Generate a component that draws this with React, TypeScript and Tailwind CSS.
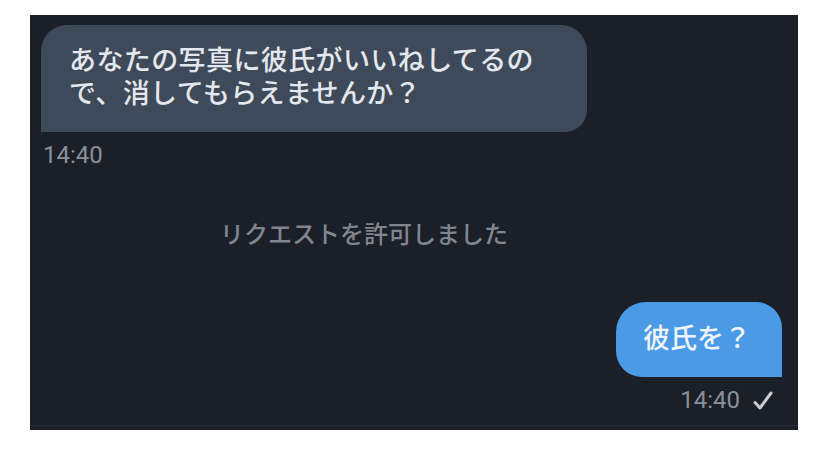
export default function App() {
  return (
    <div className="min-h-screen bg-white pt-[15px] pl-[30px] font-['Roboto','Noto_Sans_CJK_JP',sans-serif]">
      <div className="flex h-[415px] w-[768px] flex-col bg-[#1b1f27] pt-[10px]">
        {/* incoming */}
        <div className="ml-[11px] w-[546px] rounded-tl-[26px] rounded-tr-[26px] rounded-br-[22px] bg-[#3e4a5a] pb-[21px] pl-[28px] pt-[20px] text-[27px] font-medium leading-[33px] tracking-[0.4px] text-[#e4e8ee]">
          あなたの写真に彼氏がいいねしてるの
          <br />
          で、消してもらえませんか？
        </div>
        <div className="ml-[13px] mt-[9px] text-[24px] leading-[28px] text-[#8a9099]">14:40</div>

        {/* system notice */}
        <div className="ml-[190px] mt-[51px] text-[24px] font-medium leading-[30px] text-[#80868f]">
          リクエストを許可しました
        </div>

        {/* outgoing */}
        <div className="mr-[16px] mt-[52px] flex flex-col items-end">
          <div className="w-[166px] rounded-tl-[30px] rounded-tr-[26px] rounded-bl-[26px] bg-[#4a9ae6] pb-[21px] pl-[27px] pt-[21px] text-[27px] font-medium leading-[33px] text-[#eef4fb]">
            彼氏を？
          </div>
        </div>
        <div className="mr-[25px] mt-[9px] flex items-center justify-end gap-[13px] text-[24px] leading-[28px] text-[#8a9099]">
          <span>14:40</span>
          <svg width="20" height="19" viewBox="0 0 20 19" fill="none">
            <path d="M2 11.5 L7 17 L18 2" stroke="#c9cdd3" strokeWidth="3" strokeLinecap="round" strokeLinejoin="round" />
          </svg>
        </div>
        <div className="mt-auto mb-[4px] h-px bg-[#2a303a]" />
      </div>
    </div>
  );
}
